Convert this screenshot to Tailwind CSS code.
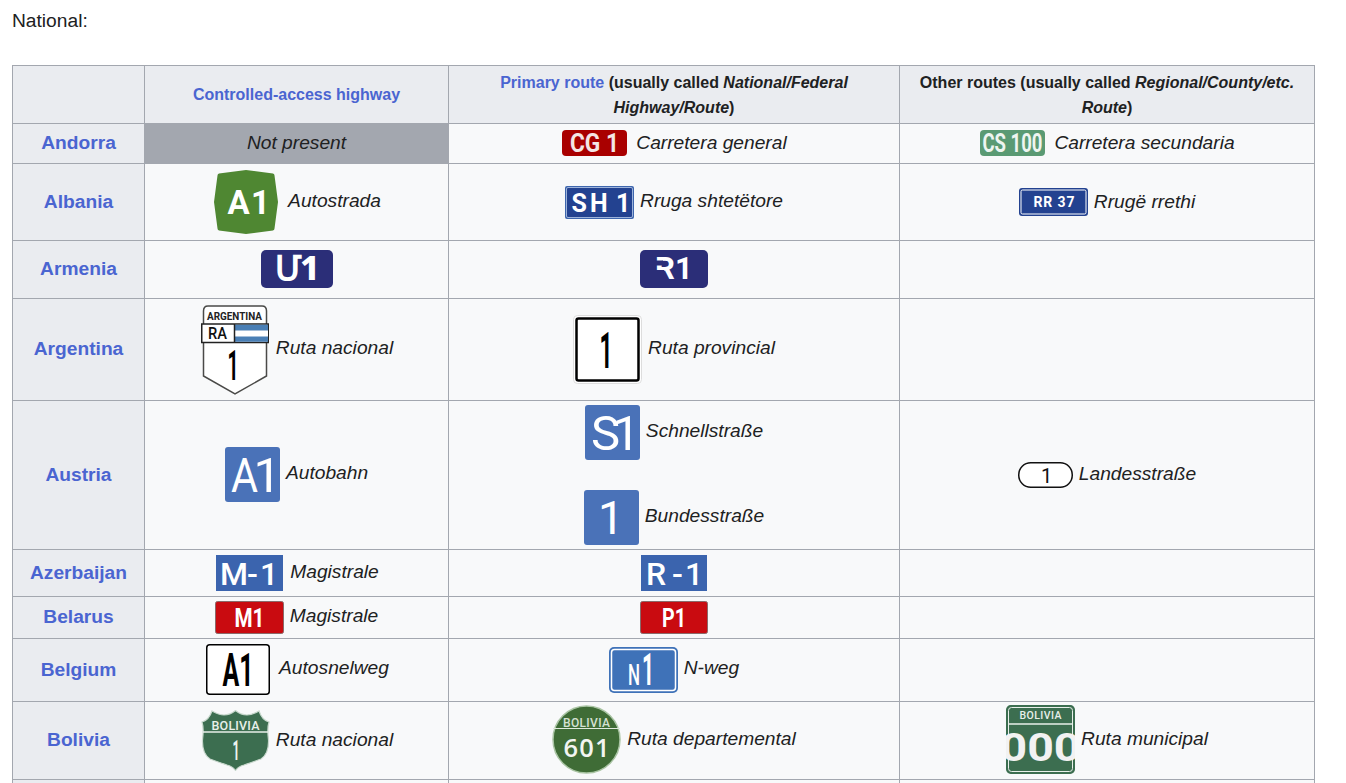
<!DOCTYPE html>
<html>
<head>
	<title>National routes</title>
	<meta charset="UTF-8" />
	<script src="https://cdn.jsdelivr.net/npm/@tailwindcss/browser@4"></script>
</head>

<body class="bg-white text-[#202122] font-['Liberation_Sans',Arial,sans-serif] text-[19.2px]">
	<div class="h-[783px] overflow-hidden">

		<p class="pl-3 pt-[9px] h-[65px] leading-[24px]">National:</p>

		<table class="ml-3 w-[1302px] table-fixed border-collapse bg-[#f8f9fa]">
			<colgroup>
				<col class="w-[132px]" />
				<col class="w-[304px]" />
				<col class="w-[451px]" />
				<col class="w-[415px]" />
			</colgroup>

			<!-- Header -->
			<tr class="h-[58px]">
				<th class="border border-[#a3a7af] bg-[#eaecf0]"></th>
				<th class="border border-[#a3a7af] bg-[#eaecf0] text-[16px] leading-[25px] text-[#4a65d1]">Controlled-access highway</th>
				<th class="border border-[#a3a7af] bg-[#eaecf0] text-[16px] leading-[25px] px-8"><span class="text-[#4a65d1]">Primary route</span> (usually called <i>National/Federal Highway/Route</i>)</th>
				<th class="border border-[#a3a7af] bg-[#eaecf0] text-[16px] leading-[25px] px-4">Other routes (usually called <i>Regional/County/etc. Route</i>)</th>
			</tr>

			<!-- Andorra -->
			<tr class="h-[40px]">
				<th class="border border-[#a3a7af] bg-[#eaecf0] text-[#4a65d1]">Andorra</th>
				<td class="border border-[#a3a7af] bg-[#a3a7af] text-center italic">Not present</td>
				<td class="border border-[#a3a7af]">
					<div class="flex items-center justify-center gap-[9px] pl-[1px]">
						<svg width="65" height="26" viewBox="0 0 65 26"><rect width="65" height="26" rx="4" fill="#a90000"/><text x="32.5" y="21.500" text-anchor="middle" textLength="49" lengthAdjust="spacingAndGlyphs" font-family="Roboto" font-size="25" font-weight="700" fill="#f4e6e6">CG 1</text></svg>
						<i>Carretera general</i>
					</div>
				</td>
				<td class="border border-[#a3a7af]">
					<div class="flex items-center justify-center gap-[9px] pl-[1px]">
						<svg width="65" height="26" viewBox="0 0 65 26"><rect width="65" height="26" rx="4" fill="#5a9a73"/><text x="32.5" y="21.500" text-anchor="middle" textLength="60" lengthAdjust="spacingAndGlyphs" font-family="Roboto" font-size="25" font-weight="700" fill="#eef5f0">CS 100</text></svg>
						<i>Carretera secundaria</i>
					</div>
				</td>
			</tr>

			<!-- Albania -->
			<tr class="h-[77px]">
				<th class="border border-[#a3a7af] bg-[#eaecf0] text-[#4a65d1]">Albania</th>
				<td class="border border-[#a3a7af]">
					<div class="flex items-center justify-center gap-[10px] pl-[2px]">
						<svg width="64" height="64" viewBox="0 0 64 64"><path d="M32 0 L59 3.500 Q60.500 4 60.500 5.500 L64 32 L60.500 58.500 Q60.500 60 59 60.500 L32 64 L5 60.500 Q3.500 60 3.500 58.500 L0 32 L3.500 5.500 Q3.500 4 5 3.500Z" fill="#4f8732"/><text x="13.500 37" y="44" font-family="Roboto" font-size="33" font-weight="700" fill="#fff">A1</text></svg>
						<i class="pb-[2px]">Autostrada</i>
					</div>
				</td>
				<td class="border border-[#a3a7af]">
					<div class="flex items-center justify-center gap-[6px]">
						<svg width="69" height="33" viewBox="0 0 69 33"><rect width="69" height="33" rx="2" fill="#3e66ad"/><rect x="1.5" y="1.5" width="66" height="30" rx="1.5" fill="#234290" stroke="#9db3da" stroke-width="1"/><text x="6.500 25 45 51" y="26" font-family="Roboto" font-size="25" font-weight="700" fill="#fff">SH 1</text></svg>
						<i class="pb-[2px]">Rruga shtetëtore</i>
					</div>
				</td>
				<td class="border border-[#a3a7af]">
					<div class="flex items-center justify-center gap-[6px]">
						<svg width="69" height="28" viewBox="0 0 69 28"><rect width="69" height="28" rx="3" fill="#234290"/><rect x="2" y="2" width="65" height="24" rx="1.5" fill="#234290" stroke="#fff" stroke-width="1"/><text x="35" y="19" text-anchor="middle" textLength="41" font-family="Roboto" font-size="14" font-weight="700" fill="#fff">RR 37</text></svg>
						<i>Rrugë rrethi</i>
					</div>
				</td>
			</tr>

			<!-- Armenia -->
			<tr class="h-[58px]">
				<th class="border border-[#a3a7af] bg-[#eaecf0] text-[#4a65d1]">Armenia</th>
				<td class="border border-[#a3a7af]">
					<div class="flex items-center justify-center pb-[2px]">
						<svg width="72" height="38" viewBox="0 0 72 38"><rect width="72" height="38" rx="5" fill="#2b2e78"/><text x="14 39" y="30" font-family="Noto Sans" font-size="34" font-weight="800" fill="#fff">Մ1</text></svg>
					</div>
				</td>
				<td class="border border-[#a3a7af]">
					<div class="flex items-center justify-center pb-[2px]">
						<svg width="68" height="38" viewBox="0 0 68 38"><rect width="68" height="38" rx="5" fill="#2b2e78"/><text x="15 35" y="28.500" font-family="Roboto" font-size="31" font-weight="700" fill="#fff">R1</text><rect x="15" y="10.500" width="8" height="5" fill="#2b2e78"/><rect x="15" y="20" width="9" height="10" fill="#2b2e78"/></svg>
					</div>
				</td>
				<td class="border border-[#a3a7af]"></td>
			</tr>

			<!-- Argentina -->
			<tr class="h-[102px]">
				<th class="border border-[#a3a7af] bg-[#eaecf0] text-[#4a65d1]">Argentina</th>
				<td class="border border-[#a3a7af]">
					<div class="flex items-center justify-center gap-[7px] pl-[1px]">
						<svg width="68" height="90" viewBox="0 0 68 90">
							<path d="M2.500 6 Q2.500 1 7 1 H61 Q65.500 1 65.500 6 V71 L34 89 L2.500 71Z" fill="#fff" stroke="#4a4a48" stroke-width="1.500"/>
							<text x="33.500" y="14.500" text-anchor="middle" textLength="55" lengthAdjust="spacingAndGlyphs" font-family="Roboto" font-size="11" font-weight="700" fill="#222">ARGENTINA</text>
							<rect x="0.750" y="19" width="66.500" height="18.500" fill="#fff" stroke="#222" stroke-width="1.500"/>
							<text x="7" y="34" textLength="19" lengthAdjust="spacingAndGlyphs" font-family="Roboto" font-size="16" font-weight="500" fill="#111">RA</text>
							<rect x="34" y="19.750" width="33" height="17" fill="#4a7fb5"/>
							<rect x="34" y="25.500" width="33" height="6" fill="#fff"/>
							<path d="M33.500 19 V37.500" stroke="#222" stroke-width="1.500"/>
							<text x="32" y="74.500" text-anchor="middle" font-family="Roboto" font-size="42" font-weight="700" textLength="11" lengthAdjust="spacingAndGlyphs" fill="#000">1</text>
						</svg>
						<i class="pb-[2px]">Ruta nacional</i>
					</div>
				</td>
				<td class="border border-[#a3a7af]">
					<div class="flex items-center justify-center gap-[6px]">
						<svg width="69" height="69" viewBox="0 0 69 69"><rect x="0.500" y="0.500" width="68" height="68" rx="4" fill="#fff" stroke="#ddd"/><rect x="3.500" y="3.500" width="62" height="62" rx="2" fill="#fff" stroke="#000" stroke-width="2.500"/><text x="33" y="53" text-anchor="middle" font-family="Roboto" font-size="50" font-weight="700" textLength="13" lengthAdjust="spacingAndGlyphs" fill="#000">1</text></svg>
						<i class="pb-[2px]">Ruta provincial</i>
					</div>
				</td>
				<td class="border border-[#a3a7af]"></td>
			</tr>

			<!-- Austria -->
			<tr class="h-[149px]">
				<th class="border border-[#a3a7af] bg-[#eaecf0] text-[#4a65d1]">Austria</th>
				<td class="border border-[#a3a7af]">
					<div class="flex items-center justify-center gap-[6px] pb-[2px]">
						<svg width="55" height="55" viewBox="0 0 55 55"><rect width="55" height="55" rx="3" fill="#4a72b8"/><text x="6" y="45" textLength="27" lengthAdjust="spacingAndGlyphs" font-family="Roboto" font-size="49" fill="#fff">A</text><text x="28.500" y="45" font-family="Roboto" font-size="49" fill="#fff">1</text></svg>
						<i class="pb-[2px]">Autobahn</i>
					</div>
				</td>
				<td class="border border-[#a3a7af]">
					<div class="flex flex-col items-center gap-[30px]">
						<div class="flex items-center justify-center gap-[6px]">
							<svg width="55" height="55" viewBox="0 0 55 55"><rect width="55" height="55" rx="3" fill="#4a72b8"/><text x="6 27.500" y="45" font-family="Roboto" font-size="49" fill="#fff">S1</text></svg>
							<i class="pb-[2px]">Schnellstraße</i>
						</div>
						<div class="flex items-center justify-center gap-[6px]">
							<svg width="55" height="55" viewBox="0 0 55 55"><rect width="55" height="55" rx="3" fill="#4a72b8"/><text x="27" y="44" text-anchor="middle" font-family="Roboto" font-size="46" fill="#fff">1</text></svg>
							<i class="pb-[2px]">Bundesstraße</i>
						</div>
					</div>
				</td>
				<td class="border border-[#a3a7af]">
					<div class="flex items-center justify-center gap-[6px]">
						<svg width="55" height="26" viewBox="0 0 55 26"><rect x="0.750" y="0.750" width="53.500" height="24.500" rx="12" fill="#fff" stroke="#111" stroke-width="1.500"/><text x="28.500" y="20.500" text-anchor="middle" font-family="Roboto" font-size="20" fill="#111">1</text></svg>
						<i class="pb-[2px]">Landesstraße</i>
					</div>
				</td>
			</tr>

			<!-- Azerbaijan -->
			<tr class="h-[47px]">
				<th class="border border-[#a3a7af] bg-[#eaecf0] text-[#4a65d1]">Azerbaijan</th>
				<td class="border border-[#a3a7af]">
					<div class="flex items-center justify-center gap-[7px] pl-[2px]">
						<svg width="67" height="36" viewBox="0 0 67 36"><rect width="67" height="36" fill="#3b64ae"/><text x="4 31 44" y="30" font-family="Roboto" font-weight="500" font-size="32" fill="#fff">M-1</text></svg>
						<i class="pb-[2px]">Magistrale</i>
					</div>
				</td>
				<td class="border border-[#a3a7af]">
					<div class="flex items-center justify-center">
						<svg width="66" height="36" viewBox="0 0 66 36"><rect width="66" height="36" fill="#3b64ae"/><text x="5 31 44" y="30" font-family="Roboto" font-weight="500" font-size="32" fill="#fff">R-1</text></svg>
					</div>
				</td>
				<td class="border border-[#a3a7af]"></td>
			</tr>

			<!-- Belarus -->
			<tr class="h-[42px]">
				<th class="border border-[#a3a7af] bg-[#eaecf0] text-[#4a65d1]">Belarus</th>
				<td class="border border-[#a3a7af]">
					<div class="flex items-center justify-center gap-[6px]">
						<svg width="69" height="33" viewBox="0 0 69 33"><rect x="0.500" y="0.500" width="68" height="32" rx="2" fill="#c90b10" stroke="#8a6a6a"/><text x="34.500" y="26" text-anchor="middle" textLength="30" lengthAdjust="spacingAndGlyphs" font-family="Roboto" font-size="25" font-weight="700" fill="#fff">M1</text></svg>
						<i class="pb-[2px]">Magistrale</i>
					</div>
				</td>
				<td class="border border-[#a3a7af]">
					<div class="flex items-center justify-center">
						<svg width="68" height="33" viewBox="0 0 68 33"><rect x="0.500" y="0.500" width="67" height="32" rx="2" fill="#c90b10" stroke="#8a6a6a"/><text x="34" y="26" text-anchor="middle" textLength="24" lengthAdjust="spacingAndGlyphs" font-family="Roboto" font-size="25" font-weight="700" fill="#fff">P1</text></svg>
					</div>
				</td>
				<td class="border border-[#a3a7af]"></td>
			</tr>

			<!-- Belgium -->
			<tr class="h-[63px]">
				<th class="border border-[#a3a7af] bg-[#eaecf0] text-[#4a65d1]">Belgium</th>
				<td class="border border-[#a3a7af]">
					<div class="flex items-center justify-center gap-[9px] pl-[2px] pb-[2px]">
						<svg width="64" height="51" viewBox="0 0 64 51"><rect x="0.750" y="0.750" width="62.500" height="49.500" rx="3" fill="#fff" stroke="#000" stroke-width="1.500"/><text x="32" y="42" text-anchor="middle" textLength="31" lengthAdjust="spacingAndGlyphs" font-family="Roboto" font-size="46" font-weight="700" fill="#000">A1</text></svg>
						<i class="pb-[2px]">Autosnelweg</i>
					</div>
				</td>
				<td class="border border-[#a3a7af]">
					<div class="flex items-center justify-center gap-[6px]">
						<svg width="69" height="46" viewBox="0 0 69 46"><rect width="69" height="46" rx="5" fill="#3f72b8"/><rect x="2.500" y="2.500" width="64" height="41" rx="3" fill="#3f72b8" stroke="#fff" stroke-width="1.500"/><text x="19" y="38" textLength="12" lengthAdjust="spacingAndGlyphs" font-family="Roboto" font-size="30" font-weight="500" fill="#fff">N</text><text x="33" y="38" textLength="12" lengthAdjust="spacingAndGlyphs" font-family="Roboto" font-size="44" font-weight="700" fill="#fff">1</text></svg>
						<i class="pb-[4px]">N-weg</i>
					</div>
				</td>
				<td class="border border-[#a3a7af]"></td>
			</tr>

			<!-- Bolivia -->
			<tr class="h-[78px]">
				<th class="border border-[#a3a7af] bg-[#eaecf0] text-[#4a65d1]">Bolivia</th>
				<td class="border border-[#a3a7af]">
					<div class="flex items-center justify-center gap-[6px] pl-[1px]">
						<svg width="69" height="61" viewBox="0 0 69 61"><path d="M1 12 Q8 10 11 1 Q18 5 23 5 Q29 5 34.500 0.500 Q40 5 46 5 Q51 5 58 1 Q61 10 68 12 Q66 18 67.500 30 Q68 44 60 49 Q49 53 43 55 Q38 56 34.500 60.500 Q31 56 26 55 Q20 53 9 49 Q1 44 1.500 30 Q3 18 1 12Z" fill="#3c6e50" stroke="#c8d8cd" stroke-width="1.200"/><path d="M2 22 H67" stroke="#e8f0ea" stroke-width="1.500"/><text x="34.500" y="19.500" text-anchor="middle" textLength="48" font-family="Roboto" font-size="12.500" font-weight="500" fill="#e8f0ea">BOLIVIA</text><text x="35" y="50" text-anchor="middle" font-family="Roboto" textLength="7" lengthAdjust="spacingAndGlyphs" font-size="28" font-weight="700" fill="#eef4ef">1</text></svg>
						<i>Ruta nacional</i>
					</div>
				</td>
				<td class="border border-[#a3a7af]">
					<div class="flex items-center justify-center gap-[6px] pb-[2px]">
						<svg width="69" height="69" viewBox="0 0 69 69"><circle cx="34.500" cy="34.500" r="33.500" fill="#3f6c36" stroke="#a9c4a3" stroke-width="1.500"/><path d="M1 23.500 H68" stroke="#dfe9dc" stroke-width="1.200"/><text x="34.500" y="21.500" text-anchor="middle" textLength="47" font-family="Roboto" font-size="12" font-weight="500" fill="#d5e0d2">BOLIVIA</text><text x="34.500" y="51.500" text-anchor="middle" textLength="46" font-family="Open Sans" font-weight="600" font-size="25.500" fill="#f2f5f1">601</text></svg>
						<i>Ruta departemental</i>
					</div>
				</td>
				<td class="border border-[#a3a7af]">
					<div class="flex items-center justify-center gap-[6px] pb-[2px]">
						<svg width="69" height="69" viewBox="0 0 69 69"><rect x="0.750" y="0.750" width="67.500" height="67.500" rx="4" fill="#3c6e50" stroke="#3c6e50" stroke-width="1.500"/><rect x="2.500" y="2.500" width="64" height="64" rx="3" fill="#3c6e50" stroke="#e8f0ea" stroke-width="1"/><path d="M3 19 H66" stroke="#e8f0ea" stroke-width="1.500"/><text x="34.500" y="14" text-anchor="middle" textLength="42" font-family="Roboto" font-size="10.500" font-weight="500" fill="#e8f0ea">BOLIVIA</text><text x="34.500" y="56" text-anchor="middle" textLength="80" lengthAdjust="spacingAndGlyphs" font-family="Roboto" font-size="38" font-weight="700" fill="#f2f2f2">000</text></svg>
						<i>Ruta municipal</i>
					</div>
				</td>
			</tr>

			<!-- Next row, cut off by the window -->
			<tr class="h-[60px]">
				<th class="border border-[#a3a7af] bg-[#eaecf0]"></th>
				<td class="border border-[#a3a7af]"></td>
				<td class="border border-[#a3a7af]"></td>
				<td class="border border-[#a3a7af]"></td>
			</tr>
		</table>

	</div>
</body>

</html>
